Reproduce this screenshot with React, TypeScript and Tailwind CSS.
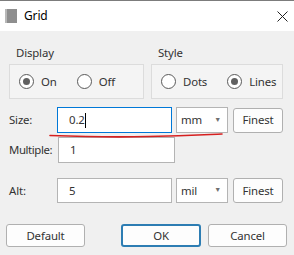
import { useState } from "react";

function Radio({ checked, label }: { checked: boolean; label: string }) {
  return (
    <div className="flex items-center gap-[7px]">
      <div className="w-[15px] h-[15px] rounded-full border border-[#5a5a5a] bg-white flex items-center justify-center">
        {checked && <div className="w-[7px] h-[7px] rounded-full bg-[#606060]" />}
      </div>
      <span>{label}</span>
    </div>
  );
}

function Group({
  title,
  width,
  children,
}: {
  title: string;
  width: string;
  children: React.ReactNode;
}) {
  return (
    <div className={`flex flex-col ${width}`}>
      <span className="pl-[7px] leading-[16px] mb-[3px]">{title}</span>
      <div className="h-[35px] border border-[#dcdcdc] bg-[#f4f4f4] flex items-center pl-[9px] gap-[20px]">
        {children}
      </div>
    </div>
  );
}

function Select({ value }: { value: string }) {
  return (
    <div className="w-[52px] h-full bg-white border border-[#b4b4b4] flex items-center justify-between pl-[4px] pr-[6px]">
      <span>{value}</span>
      <span className="text-[7px] text-[#707070]">▼</span>
    </div>
  );
}

function Btn({ label, w, primary = false }: { label: string; w: string; primary?: boolean }) {
  return (
    <div
      className={`${w} h-full rounded-[3px] bg-[#fdfdfd] flex items-center justify-center ${
        primary ? "border-2 border-[#2d7db3]" : "border border-[#b0b0b0]"
      }`}
    >
      {label}
    </div>
  );
}

export default function App() {
  const [size] = useState("0.2");

  return (
    <div className="relative w-[294px] h-[255px] bg-[#f0f0f0] flex flex-col font-['Noto_Sans',sans-serif] text-[11.4px] tracking-[-0.15px] text-[#333] border-t border-[#7c7c7c] overflow-hidden">
      {/* title bar */}
      <div className="h-[30px] bg-white flex items-center pl-[5px] pr-[6px]">
        <div className="w-[12px] h-[14px] flex mr-[7px]">
          <div className="w-[2px] h-full bg-[#b8b8b8]" />
          <div className="flex-1 bg-[#8e8e8e]" />
        </div>
        <span className="text-[12px] text-black">Grid</span>
        <svg className="ml-auto" width="11" height="11" viewBox="0 0 11 11">
          <path d="M0.5 0.5 L10.5 10.5 M10.5 0.5 L0.5 10.5" stroke="#222" strokeWidth="1" />
        </svg>
      </div>

      <div className="flex flex-col pl-[9px] pr-[11px] pt-[14px]">
        <div className="flex gap-[7px]">
          <Group title="Display" width="w-[136px]">
            <Radio checked label="On" />
            <Radio checked={false} label="Off" />
          </Group>
          <Group title="Style" width="w-[133px]">
            <Radio checked={false} label="Dots" />
            <Radio checked label="Lines" />
          </Group>
        </div>

        <div className="flex items-center h-[26px] mt-[8px]">
          <span className="w-[49px]">Size:</span>
          <div className="w-[117px] h-full bg-white border border-[#0078d7] flex items-center pl-[11px]">
            <span>{size}</span>
            <span className="w-[1px] h-[15px] bg-black" />
          </div>
          <div className="ml-[4px] h-full">
            <Select value="mm" />
          </div>
          <div className="ml-[5px] h-[25px]">
            <Btn label="Finest" w="w-[50px]" />
          </div>
        </div>

        <div className="flex items-center h-[26px] mt-[4px]">
          <span className="w-[49px] tracking-[-0.4px]">Multiple:</span>
          <div className="w-[117px] h-full bg-white border border-[#b4b4b4] flex items-center pl-[11px]">
            1
          </div>
        </div>

        <div className="flex items-center h-[25px] mt-[15px]">
          <span className="w-[49px]">Alt:</span>
          <div className="w-[117px] h-full bg-white border border-[#b4b4b4] flex items-center pl-[11px]">
            5
          </div>
          <div className="ml-[4px] h-full">
            <Select value="mil" />
          </div>
          <div className="ml-[5px] h-full">
            <Btn label="Finest" w="w-[50px]" />
          </div>
        </div>

        <div className="flex items-center h-[23px] mt-[21px] -ml-[3px] -mr-[4px]">
          <Btn label="Default" w="w-[79px]" />
          <div className="ml-auto flex h-full gap-[7px]">
            <Btn label="OK" w="w-[80px]" primary />
            <Btn label="Cancel" w="w-[79px]" />
          </div>
        </div>
      </div>

      {/* red hand-drawn underline */}
      <svg className="absolute left-[48px] top-[130px]" width="176" height="8" viewBox="0 0 176 8">
        <path
          d="M2 4.5 C 30 5.5, 60 6.5, 100 5.5 S 160 3.5, 174 3"
          fill="none"
          stroke="#d62020"
          strokeWidth="1.6"
          strokeLinecap="round"
        />
      </svg>
    </div>
  );
}
